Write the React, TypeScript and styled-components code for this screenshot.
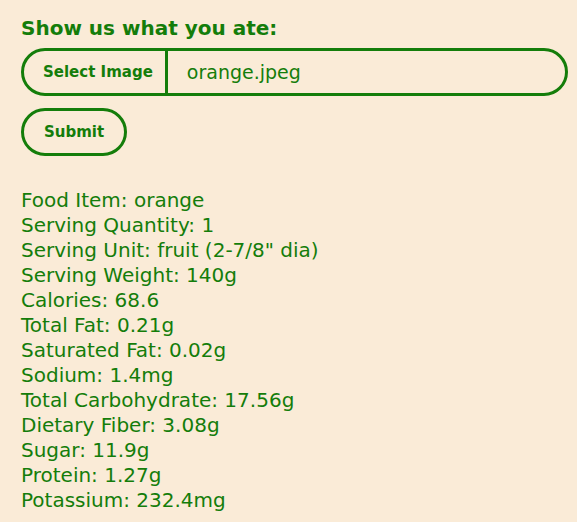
import styled, { createGlobalStyle } from "styled-components";

const GREEN = "#147d0a";

const Global = createGlobalStyle`
    html, body {
        margin: 0;
        background: #faebd7;
    }
    body {
        font-family: "DejaVu Sans", sans-serif;
        color: ${GREEN};
    }
`;

const Page = styled.div`
    padding: 13px 9px 0 21px;
`;

const Title = styled.h2`
    margin: 0 0 5px;
    font-size: 20px;
    font-weight: 700;
    line-height: 30px;
`;

const FileRow = styled.div`
    display: flex;
    align-items: stretch;
    height: 42px;
    border: 3px solid ${GREEN};
    border-radius: 24px;
    overflow: hidden;
`;

const SelectButton = styled.div`
    display: flex;
    align-items: center;
    padding: 0 12px 0 19px;
    border-right: 3px solid ${GREEN};
    font-size: 15px;
    font-weight: 700;
`;

const FileName = styled.div`
    display: flex;
    align-items: center;
    padding-left: 19px;
    font-size: 19px;
`;

const SubmitButton = styled.button`
    margin-top: 12px;
    height: 48px;
    padding: 0 20px;
    background: transparent;
    border: 3px solid ${GREEN};
    border-radius: 24px;
    color: ${GREEN};
    font-family: inherit;
    font-size: 15px;
    font-weight: 700;
`;

const Facts = styled.div`
    margin-top: 32px;
    font-size: 20px;
    line-height: 25px;
`;

const facts = [
    "Food Item: orange",
    "Serving Quantity: 1",
    'Serving Unit: fruit (2-7/8" dia)',
    "Serving Weight: 140g",
    "Calories: 68.6",
    "Total Fat: 0.21g",
    "Saturated Fat: 0.02g",
    "Sodium: 1.4mg",
    "Total Carbohydrate: 17.56g",
    "Dietary Fiber: 3.08g",
    "Sugar: 11.9g",
    "Protein: 1.27g",
    "Potassium: 232.4mg",
];

export default function App() {
    return (
        <Page>
            <Global />
            <Title>Show us what you ate:</Title>
            <FileRow>
                <SelectButton>Select Image</SelectButton>
                <FileName>orange.jpeg</FileName>
            </FileRow>
            <SubmitButton>Submit</SubmitButton>
            <Facts>
                {facts.map((f) => (
                    <div key={f}>{f}</div>
                ))}
            </Facts>
        </Page>
    );
}
